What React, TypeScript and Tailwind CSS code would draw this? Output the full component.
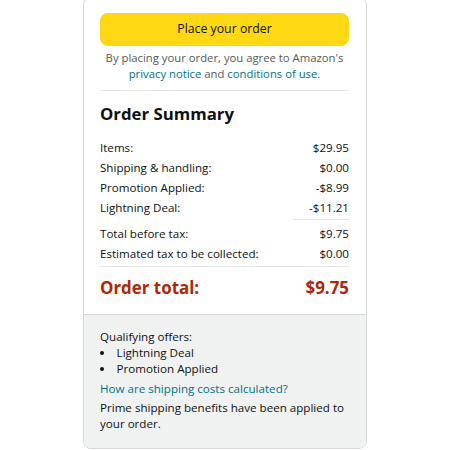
const rows = [
  { label: "Items:", value: "$29.95" },
  { label: "Shipping & handling:", value: "$0.00" },
  { label: "Promotion Applied:", value: "-$8.99" },
  { label: "Lightning Deal:", value: "-$11.21" },
];

const totals = [
  { label: "Total before tax:", value: "$9.75" },
  { label: "Estimated tax to be collected:", value: "$0.00" },
];

function Row({ label, value }: { label: string; value: string }) {
  return (
    <div className="flex h-[20px] items-center justify-between">
      <span>{label}</span>
      <span>{value}</span>
    </div>
  );
}

export default function App() {
  return (
    <div className="flex min-h-[450px] justify-center bg-white font-['Open_Sans',sans-serif] text-[11.6px] text-[#0f1111]">
      <div className="mt-[-3px] flex h-[452px] w-[284px] flex-col overflow-hidden rounded-[8px] border border-[#d5d9d9]">
        <div className="pb-[14px] pl-[16px] pr-[17px] pt-[15px]">
          <button
            type="button"
            className="flex h-[33px] w-full items-center justify-center rounded-[8px] bg-[#ffd814] text-[12.3px] text-[#0f1111]"
          >
            Place your order
          </button>
          <p className="mt-[4px] text-center text-[11.3px] leading-[16px] text-[#565959]">
            By placing your order, you agree to Amazon's{" "}
            <span className="text-[#007185]">privacy notice</span> and{" "}
            <span className="text-[#007185]">conditions of use</span>.
          </p>
          <div className="mt-[8px] border-t border-[#e7e7e7]" />

          <h2 className="mt-[10px] text-[16.8px] font-bold leading-[26px]">
            Order Summary
          </h2>

          <div className="mt-[11px]">
            {rows.map((r) => (
              <Row key={r.label} {...r} />
            ))}
          </div>
          <div className="mt-[1px] flex justify-end">
            <div className="w-[56px] border-t border-[#e7e7e7]" />
          </div>
          <div className="mt-[4px]">
            {totals.map((r) => (
              <Row key={r.label} {...r} />
            ))}
          </div>
          <div className="mt-[2px] border-t border-[#e7e7e7]" />
          <div className="mt-[9px] flex items-center justify-between text-[16.9px] font-bold leading-[24px] text-[#b12704]">
            <span>Order total:</span>
            <span>$9.75</span>
          </div>
        </div>

        <div className="flex-1 border-t border-[#d5d9d9] bg-[#f0f2f2] pl-[16px] pr-[17px] pt-[14px] leading-[16px]">
          <div>Qualifying offers:</div>
          <ul className="list-inside list-disc">
            <li>Lightning Deal</li>
            <li>Promotion Applied</li>
          </ul>
          <div className="mt-[4px] text-[#007185]">
            How are shipping costs calculated?
          </div>
          <div className="mt-[3px]">
            Prime shipping benefits have been applied to your order.
          </div>
        </div>
      </div>
    </div>
  );
}
